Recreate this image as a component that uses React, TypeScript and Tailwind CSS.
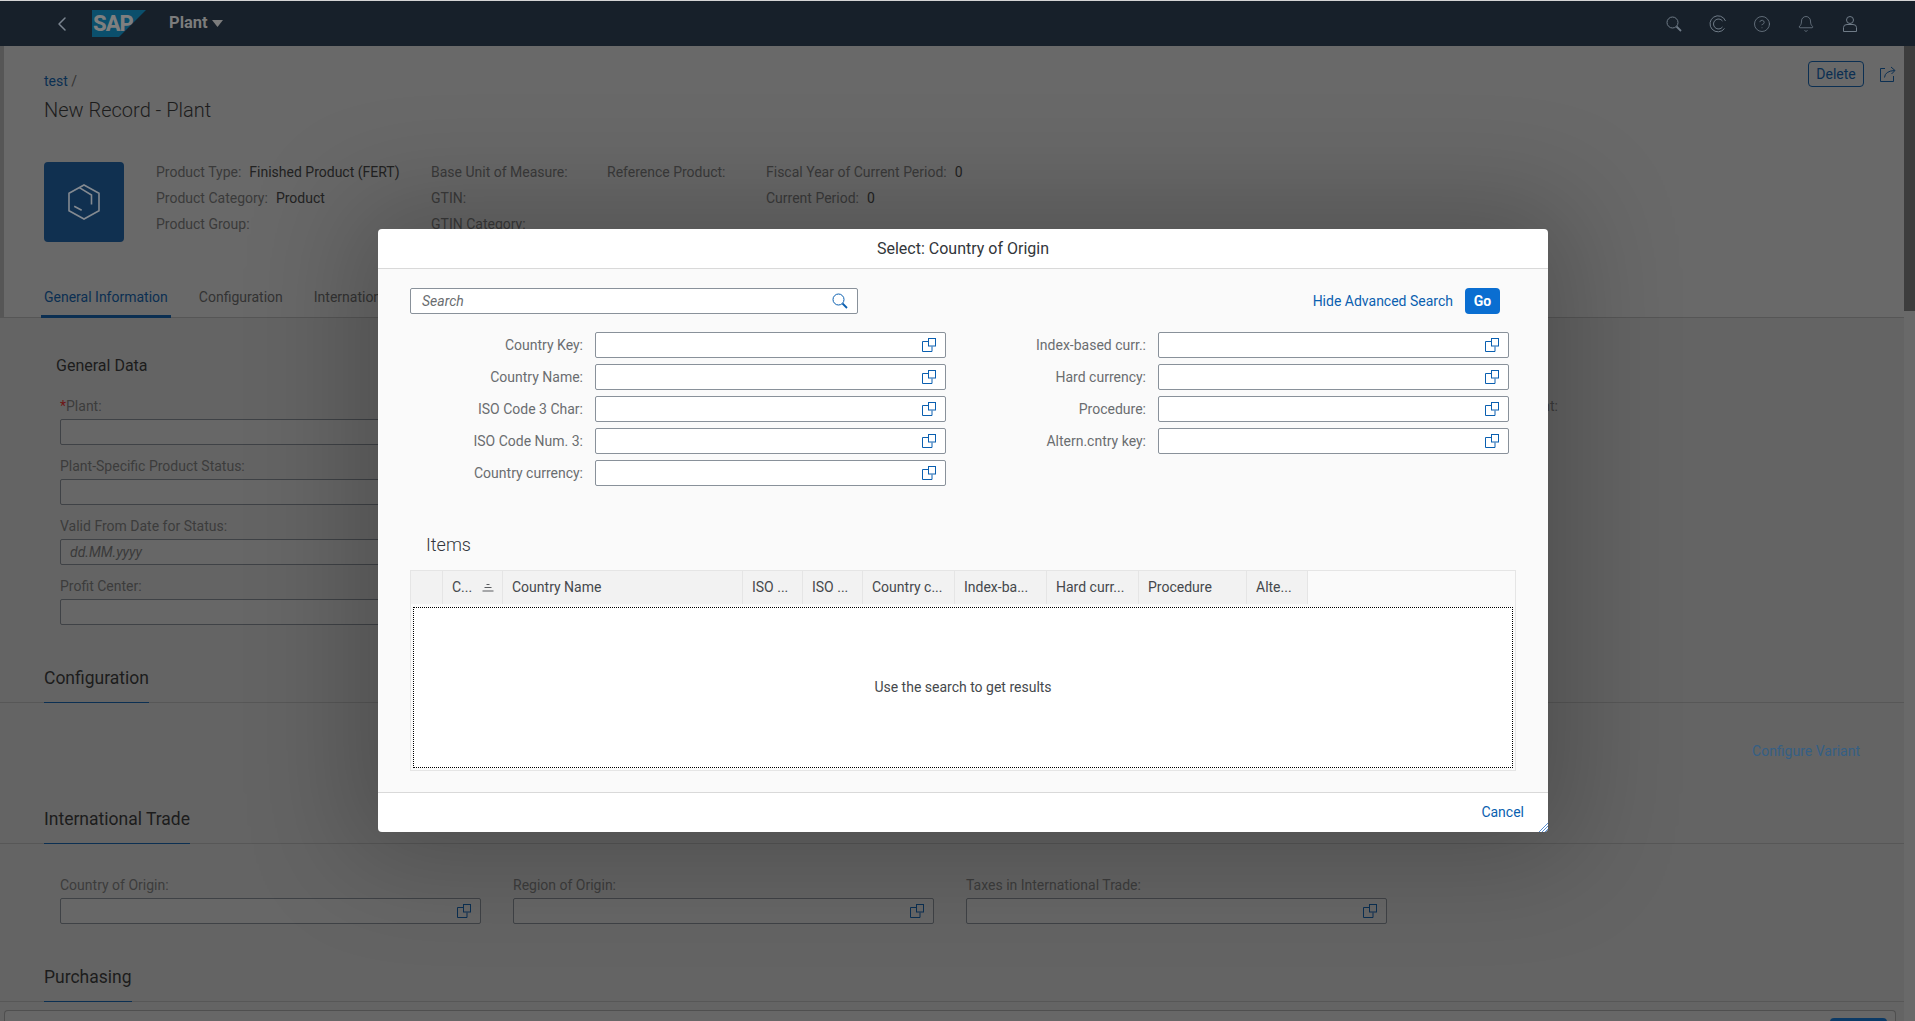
import type { FC } from 'react';
import { Bell, CircleHelp, ChevronLeft } from 'lucide-react';

const ValueHelpIcon: FC<{ className?: string }> = ({ className }) => (
  <svg width="14" height="14" viewBox="0 0 14 14" fill="none" stroke="currentColor" strokeWidth="1" className={className}>
    <rect x="6.5" y="0.5" width="7" height="7.5" />
    <path d="M6 3.5H0.5V13.5H10V8.5" />
  </svg>
);

const SearchIcon: FC<{ className?: string }> = ({ className }) => (
  <svg width="16" height="16" viewBox="0 0 16 16" fill="none" stroke="currentColor" className={className}>
    <circle cx="6.5" cy="6.5" r="5.5" strokeWidth="1" />
    <path d="M10.5 10.5L15 15" strokeWidth="1.8" />
  </svg>
);

const DialogField: FC<{ label: string }> = ({ label }) => (
  <div className="flex items-center gap-[12px]">
    <span className="w-[173px] text-right text-[14px] leading-[20px] text-[#6a6d70]">{label}</span>
    <div className="flex h-[26px] w-[351px] items-center justify-end rounded-[2px] border border-[#89919a] bg-white pr-[9px]">
      <ValueHelpIcon className="text-[#0a5fb0]" />
    </div>
  </div>
);

const PageField: FC<{ label: string; required?: boolean; placeholder?: string; help?: boolean }> = ({ label, required, placeholder, help }) => (
  <div className="flex w-[421px] flex-col gap-[3px]">
    <span className="text-[14px] leading-[20px] text-[#3c3c3c]">
      {required && <span className="text-[#6e1414]">*</span>}
      {label}
    </span>
    <div className="flex h-[26px] items-center justify-between rounded-[2px] border border-[#3f4246] bg-[#676767] px-[9px]">
      <span className="text-[14px] italic text-[#3a3a3a]">{placeholder}</span>
      {help && <ValueHelpIcon className="text-[#0b2f52]" />}
    </div>
  </div>
);

const SectionHeading: FC<{ title: string }> = ({ title }) => (
  <div className="border-b border-[#575757] pl-[44px]">
    <div className="-mb-px inline-block border-b border-[#0b2f52] pb-[11px] pt-px text-[17.5px] leading-[26px] text-[#1c1c1c]">{title}</div>
  </div>
);

const KpiLine: FC<{ label: string; value?: string }> = ({ label, value }) => (
  <div className="flex h-[26px] items-center gap-[8px] whitespace-nowrap text-[14px]">
    <span className="text-[#3a3a3a]">{label}</span>
    {value && <span className="text-[#222222]">{value}</span>}
  </div>
);

const columns = [
  { w: 'w-[32px]', title: '' },
  { w: 'w-[60px]', title: 'C...', sort: true },
  { w: 'w-[240px]', title: 'Country Name' },
  { w: 'w-[60px]', title: 'ISO ...' },
  { w: 'w-[60px]', title: 'ISO ...' },
  { w: 'w-[92px]', title: 'Country c...' },
  { w: 'w-[92px]', title: 'Index-ba...' },
  { w: 'w-[92px]', title: 'Hard curr...' },
  { w: 'w-[108px]', title: 'Procedure' },
  { w: 'w-[61px]', title: 'Alte...' },
];

export default function App() {
  return (
    <div className="relative h-[1021px] w-[1915px] overflow-hidden bg-[#646464] font-[family-name:Roboto,sans-serif]">
      <div className="h-px bg-[#d4d4d4]" />

      {/* shell bar */}
      <header className="flex h-[45px] items-center bg-[#17202a] text-[#6f7b87]">
        <ChevronLeft className="ml-[50px] text-[#7b8590]" size={24} strokeWidth={1.5} />
        <svg width="55" height="27" viewBox="0 0 55 27" className="ml-[18px]">
          <polygon points="0,0 54,0 27,27 0,27" fill="#0b4f6c" />
          <text x="1" y="21" fontSize="22" fontWeight="800" fill="#7f7f7f" fontFamily="Roboto, sans-serif" letterSpacing="-1">SAP</text>
        </svg>
        <span className="ml-[22px] text-[16.5px] font-bold text-[#7c7c7c]">Plant</span>
        <svg width="11" height="7" viewBox="0 0 11 7" className="ml-[4px]"><polygon points="0,0 11,0 5.5,7" fill="#7c7c7c" /></svg>

        <div className="ml-auto flex items-center">
          <SearchIcon />
          <svg width="18" height="18" viewBox="0 0 18 18" fill="none" stroke="currentColor" className="ml-[27px]">
            <path d="M15.5 13.5A8 8 0 1 1 16.5 6" />
            <path d="M13.5 12A5 5 0 1 1 13.5 6" />
          </svg>
          <CircleHelp className="ml-[26px]" size={18} strokeWidth={1.1} />
          <Bell className="ml-[26px]" size={18} strokeWidth={1.1} />
          <svg width="14" height="16" viewBox="0 0 14 16" fill="none" stroke="currentColor" className="ml-[28px] mr-[58px]">
            <circle cx="7" cy="4" r="3.5" />
            <path d="M0.5 15.5V11.5Q0.5 8.5 4 8.5H10Q13.5 8.5 13.5 11.5V15.5Z" />
          </svg>
        </div>
      </header>

      <div className="flex h-[975px]">
        <main className="min-w-0 flex-1">
          {/* object page header */}
          <section className="flex h-[272px] flex-col border-b border-l-[4px] border-[#565656] bg-[#696969] pl-[40px]">
            <div className="box-content flex h-[30px] items-start justify-between pt-[15px]">
              <div className="pt-[10px] text-[14px] leading-[20px]">
                <span className="text-[#0b2f52]">test</span> <span className="text-[#333]">/</span>
              </div>
              <div className="flex items-center gap-[16px] pr-[8px]">
                <button className="h-[26px] w-[56px] rounded-[4px] border border-[#0b2f52] text-[14px] text-[#0b2f52]">Delete</button>
                <svg width="16" height="16" viewBox="0 0 16 16" fill="none" stroke="#0b2f52">
                  <path d="M5 2.5H0.5V15.5H13.5V10" />
                  <path d="M4.5 11.5Q5 5 14.5 4.5M11 1L15 4.5L11.5 8" />
                </svg>
              </div>
            </div>
            <h1 className="mt-[4px] text-[20px] font-light leading-[30px] text-[#1c1c1c]">New Record - Plant</h1>

            <div className="mt-[37px] flex h-[80px]">
              <div className="flex h-[80px] w-[80px] items-center justify-center rounded-[4px] bg-[#103050]">
                <svg width="32" height="36" viewBox="0 0 32 36" fill="none" stroke="#848a91" strokeWidth="1.6">
                  <path d="M16 1L31 9.3V26.7L16 35L1 26.7V9.3Z" />
                  <path d="M11.4 3.6L23.5 11V20.6" />
                  <path d="M6.2 22.2L13.7 26.3" />
                </svg>
              </div>
              <div className="-mt-[3px] ml-[32px] w-[275px]">
                <KpiLine label="Product Type:" value="Finished Product (FERT)" />
                <KpiLine label="Product Category:" value="Product" />
                <KpiLine label="Product Group:" />
              </div>
              <div className="-mt-[3px] w-[176px]">
                <KpiLine label="Base Unit of Measure:" />
                <KpiLine label="GTIN:" />
                <KpiLine label="GTIN Category:" />
              </div>
              <div className="-mt-[3px] w-[159px]">
                <KpiLine label="Reference Product:" />
              </div>
              <div className="-mt-[3px]">
                <KpiLine label="Fiscal Year of Current Period:" value="0" />
                <KpiLine label="Current Period:" value="0" />
              </div>
            </div>

            <nav className="mt-[45px] flex gap-[25px] text-[14px] leading-[20px]">
              <span className="-ml-[3px] rounded-t-[2px] border-b-[3px] border-[#0b2f52] px-[3px] pb-[8px] text-[#0b2f52]">General Information</span>
              <span className="px-[3px] text-[#333]">Configuration</span>
              <span className="px-[3px] text-[#333]">International Trade</span>
            </nav>
          </section>

          {/* general data */}
          <section className="pl-[56px] pt-[36px]">
            <h2 className="text-[16px] leading-[24px] text-[#1c1c1c]">General Data</h2>
            <div className="mt-[18px] flex pl-[4px] pr-[346px]">
              <div className="flex flex-col gap-[11px]">
                <PageField label="Plant:" required />
                <PageField label="Plant-Specific Product Status:" />
                <PageField label="Valid From Date for Status:" placeholder="dd.MM.yyyy" />
                <PageField label="Profit Center:" />
              </div>
              <span className="ml-auto text-[14px] leading-[20px] text-[#3c3c3c]">Product Variant:</span>
            </div>
          </section>

          <div className="mt-[39px]"><SectionHeading title="Configuration" /></div>
          <div className="flex h-[102px] justify-end pr-[44px] pt-[38px] text-[14px] leading-[20px] text-[#345f84]">Configure Variant</div>

          <SectionHeading title="International Trade" />
          <div className="flex h-[119px] gap-[32px] pl-[60px] pt-[31px]">
            <PageField label="Country of Origin:" help />
            <PageField label="Region of Origin:" help />
            <PageField label="Taxes in International Trade:" help />
          </div>

          <SectionHeading title="Purchasing" />
        </main>
        <div className="w-[11px] bg-[#696969]">
          <div className="h-[265px] bg-[#3d3d3d]" />
        </div>
      </div>

      {/* footer bar */}
      <footer className="absolute bottom-0 left-[4px] flex h-[11px] w-[1892px] justify-end rounded-t-[4px] border-x border-t border-[#4f4f4f] bg-[#676767] pr-[8px] pt-[7px]">
        <div className="h-[10px] w-[57px] rounded-t-[4px] bg-[#0b3a66]" />
      </footer>

      {/* value help dialog */}
      <div className="absolute left-[378px] top-[229px] flex h-[603px] w-[1170px] flex-col rounded-[4px] bg-white shadow-[0_0_110px_25px_rgba(0,0,0,0.22)]">
        <div className="flex h-[40px] shrink-0 items-center justify-center border-b border-[#d9d9d9] text-[16px] text-[#32363a]">
          Select: Country of Origin
        </div>

        <div className="flex min-h-0 flex-1 flex-col bg-[#fafafa] px-[32px] pt-[19px]">
          <div className="flex items-center justify-between pr-[16px]">
            <div className="flex h-[26px] w-[448px] items-center justify-between rounded-[2px] border border-[#89919a] bg-white pl-[11px] pr-[9px]">
              <span className="text-[14px] italic text-[#6a6d70]">Search</span>
              <SearchIcon className="text-[#0a5fb0]" />
            </div>
            <div className="flex items-center gap-[12px]">
              <span className="text-[14px] text-[#0a5fb0]">Hide Advanced Search</span>
              <button className="h-[26px] w-[35px] rounded-[4px] bg-[#0a6ed1] text-[14px] font-bold text-white">Go</button>
            </div>
          </div>

          <div className="mt-[18px] flex">
            <div className="flex w-[563px] flex-col gap-[6px]">
              <DialogField label="Country Key:" />
              <DialogField label="Country Name:" />
              <DialogField label="ISO Code 3 Char:" />
              <DialogField label="ISO Code Num. 3:" />
              <DialogField label="Country currency:" />
            </div>
            <div className="flex flex-col gap-[6px]">
              <DialogField label="Index-based curr.:" />
              <DialogField label="Hard currency:" />
              <DialogField label="Procedure:" />
              <DialogField label="Altern.cntry key:" />
            </div>
          </div>

          <h3 className="ml-[16px] mt-[47px] text-[18px] font-light leading-[24px] text-[#32363a]">Items</h3>

          <div className="mt-[13px] h-[201px] w-[1106px] border border-[#e5e5e5]">
            <div className="flex h-[33px] text-[14px] text-[#45484c]">
              {columns.map((col, index) => (
                <div key={index} className={`${col.w} flex items-center justify-between border-r border-[#e5e5e5] bg-[#f2f2f2] pl-[9px] pr-[8px]`}>
                  <span className="whitespace-nowrap">{col.title}</span>
                  {col.sort && (
                    <svg width="12" height="9" viewBox="0 0 12 9" fill="none" stroke="#5a5d60">
                      <path d="M4.5 1.5H7.5M2.5 4.5H9.5M0.5 8H11.5" />
                    </svg>
                  )}
                </div>
              ))}
            </div>
            <div className="mx-[2px] mt-[3px] flex h-[161px] items-center justify-center border border-dotted border-black bg-white text-[14px] text-[#45484c]">
              Use the search to get results
            </div>
          </div>
        </div>

        <div className="relative flex h-[40px] shrink-0 items-center justify-end border-t border-[#d9d9d9] pr-[24px] text-[14px] text-[#0a5fb0]">
          Cancel
          <svg width="9" height="9" viewBox="0 0 9 9" fill="none" stroke="#5b8fd0" className="absolute bottom-0 right-0">
            <path d="M0 9L9 0M3 9L9 3M6 9L9 6" />
          </svg>
        </div>
      </div>
    </div>
  );
}
